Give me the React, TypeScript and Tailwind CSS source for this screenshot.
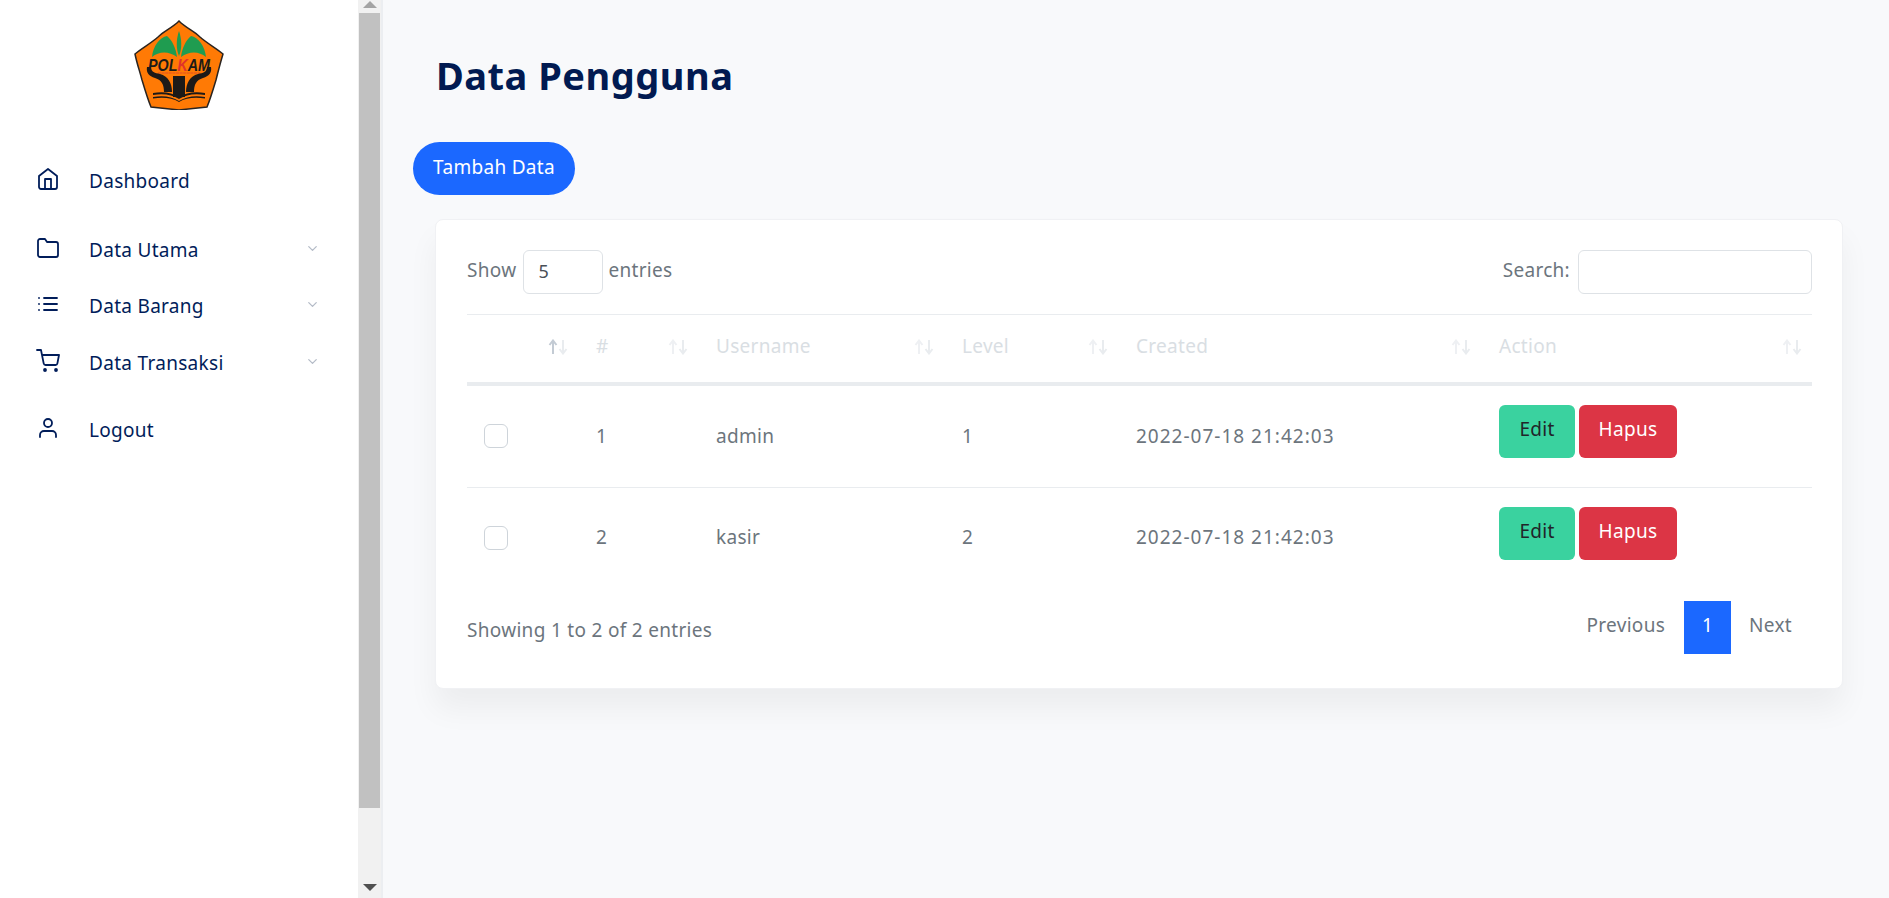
import React from "react";
import { FiHome, FiFolder, FiList, FiShoppingCart, FiUser, FiChevronDown } from "react-icons/fi";

const font = { fontFamily: '"Noto Sans", "Open Sans", sans-serif' };

function Logo() {
  return (
    <svg viewBox="0 0 90 90" className="w-[90px] h-[90px]">
      <path d="M45 1 C52 8 60 11 66 17 C74 24 82 28 89 34 C86 44 84 52 82 60 C79 70 76 80 73 87 C64 88 54 89 45 90 C36 89 26 88 17 87 C14 80 11 70 8 60 C6 52 3 44 1 34 C8 28 16 24 24 17 C30 11 38 8 45 1 Z" fill="#ff7a05" stroke="#2a2420" strokeWidth="1.5" />
      <path d="M45 11 C48 20 48 29 45 36 C42 29 42 20 45 11 Z" fill="#1f9c50" />
      <path d="M43 37 C42 28 38 20 33 16 C26 17 19 26 18 37 C25 31 35 31 43 37 Z" fill="#1f9c50" />
      <path d="M47 37 C48 28 52 20 57 16 C64 17 71 26 72 37 C65 31 55 31 47 37 Z" fill="#1f9c50" />
      <text x="45" y="51" textAnchor="middle" fontSize="17" fontWeight="700" fontStyle="italic" fill="#1d1a18" fontFamily='"Liberation Sans", sans-serif' textLength="62" lengthAdjust="spacingAndGlyphs">POL<tspan fill="#e0332b">K</tspan>AM</text>
      <path d="M24 53 H66" stroke="#d8452c" strokeWidth="0.8" strokeDasharray="3 0.6" />
      <path d="M13 47 C12 53 15 56 21 58 C28 60 30 65 30 72 L38 72 C38 63 34 56 26 54 C21 53 17 52 17 47 Z" fill="#1d1a18" />
      <path d="M77 47 C78 53 75 56 69 58 C62 60 60 65 60 72 L52 72 C52 63 56 56 64 54 C69 53 73 52 73 47 Z" fill="#1d1a18" />
      <rect x="39" y="56" width="12" height="21" fill="#1d1a18" />
      <path d="M19 73 C30 71 38 73 45 77 C52 73 60 71 71 73 L71 75 C60 73 52 75 45 79 C38 75 30 73 19 75 Z M19 77 C30 75 38 77 45 81 C52 77 60 75 71 77 L71 78.5 C60 77 52 78 45 82 C38 78 30 77 19 78.5 Z" fill="#1d1a18" />
    </svg>
  );
}

function NavItem({ icon, label, chevron, cls }: { icon: React.ReactNode; label: string; chevron?: boolean; cls: string }) {
  return (
    <div className={`flex items-center h-[30px] pl-[36px] text-[19px] tracking-[0.3px] text-[#011d5a] ${cls}`}>
      <span className="w-[53px] flex items-center -mt-[4px]">{icon}</span>
      <span className="flex-1">{label}</span>
      {chevron && <FiChevronDown className="mr-[38px] -mt-[4px] text-[#b4bbc7]" size={15} strokeWidth={2} />}
    </div>
  );
}

function Sort({ active }: { active?: boolean }) {
  return (
    <svg viewBox="0 0 20 16" className="w-[20px] h-[16px] -mt-[2px]" fill="none" strokeWidth="2">
      <path d="M5 15V2M1.5 6L5 1.5L8.5 6" stroke={active ? "#c3cbd4" : "#eef0f3"} />
      <path d="M15 1V14M11.5 10L15 14.5L18.5 10" stroke="#e9ecef" />
    </svg>
  );
}

const cols = ["w-[111px]", "w-[120px]", "w-[246px]", "w-[174px]", "w-[363px]", "w-[331px]"];
const heads = ["", "#", "Username", "Level", "Created", "Action"];
const rows = [
  ["1", "admin", "1", "2022-07-18 21:42:03"],
  ["2", "kasir", "2", "2022-07-18 21:42:03"],
];

function Row({ r, last }: { r: string[]; last?: boolean }) {
  return (
    <tr className={last ? "" : "border-b border-[#e9ecef]"}>
      <td className={`h-[104px] pl-[17px] ${last ? "pb-[3px]" : ""}`}>
        <div className="w-[24px] h-[24px] rounded-[6px] border border-[#ced4da] bg-white" />
      </td>
      {r.map((c, i) => (
        <td key={i} className={`pl-[18px] text-[#6c757d] ${last ? "pb-[5px]" : ""} ${i === 3 ? "tracking-[1px]" : ""}`}>{c}</td>
      ))}
      <td className="pl-[18px] align-top pt-[19px]">
        <div className="flex gap-[4px]">
          <button className="w-[76px] h-[53px] rounded-[6px] bg-[#3ad29f] text-[#212529] pb-[4px]">Edit</button>
          <button className="w-[98px] h-[53px] rounded-[6px] bg-[#dc3545] text-white pb-[4px]">Hapus</button>
        </div>
      </td>
    </tr>
  );
}

export default function App() {
  return (
    <div className="flex h-[898px] w-[1889px] overflow-hidden bg-[#f8f9fb]" style={font}>
      <aside className="w-[358px] shrink-0 bg-white">
        <div className="flex justify-center pt-[20px]"><Logo /></div>
        <nav>
          <NavItem icon={<FiHome size={24} strokeWidth={1.8} />} label="Dashboard" cls="mt-[56px]" />
          <NavItem icon={<FiFolder size={24} strokeWidth={1.8} />} label="Data Utama" chevron cls="mt-[39px]" />
          <NavItem icon={<FiList size={24} strokeWidth={1.8} />} label="Data Barang" chevron cls="mt-[26px]" />
          <NavItem icon={<FiShoppingCart size={24} strokeWidth={1.8} />} label="Data Transaksi" chevron cls="mt-[27px]" />
          <NavItem icon={<FiUser size={24} strokeWidth={1.8} />} label="Logout" cls="mt-[37px]" />
        </nav>
      </aside>

      <div className="w-[25px] shrink-0 bg-[#f1f1f1] border-r-2 border-[#eceef1] flex flex-col items-center">
        <svg viewBox="0 0 12 6" className="w-[14px] h-[7px] mt-[1px] mb-[5px]"><path d="M6 0L12 6H0Z" fill="#a3a3a3" /></svg>
        <div className="w-[21px] h-[795px] bg-[#c1c1c1]" />
        <div className="flex-1" />
        <svg viewBox="0 0 12 6" className="w-[14px] h-[7px] mb-[7px]"><path d="M0 0H12L6 6Z" fill="#505050" /></svg>
      </div>

      <main className="flex-1 min-w-0">
        <h1 className="pl-[53px] pt-[45px] h-[142px] text-[38px] leading-[60px] font-bold text-[#011a51] tracking-[0.5px]">Data Pengguna</h1>
        <button className="ml-[30px] w-[162px] h-[53px] rounded-full bg-[#1b68ff] text-white text-[19px] tracking-[0.3px] pb-[3px] block">Tambah Data</button>
        <section className="ml-[52px] mt-[24px] w-[1408px] h-[470px] rounded-[8px] bg-white border border-[#f0f1f4] pl-[31px] pr-[30px] pt-[30px] shadow-[0_20px_30px_rgba(0,0,0,0.05)] text-[19px] tracking-[0.3px]">
          <div className="flex items-center justify-between h-[44px]">
            <div className="flex items-center text-[#6c757d]">
              <span className="-mt-[3px]">Show</span>
              <div className="ml-[7px] mr-[5px] w-[80px] h-[44px] rounded-[6px] border border-[#dee2e6] pl-[14px] pb-[2px] flex items-center text-[#495057] text-[18px]">5</div>
              <span className="-mt-[3px]">entries</span>
            </div>
            <div className="flex items-center text-[#6c757d]">
              <span className="mr-[8px] -mt-[4px]">Search:</span>
              <div className="w-[234px] h-[44px] rounded-[6px] border border-[#dee2e6]" />
            </div>
          </div>
          <table className="table-fixed w-[1345px] mt-[20px] border-t border-[#e9ecef] border-collapse">
            <colgroup>{cols.map((c, i) => <col key={i} className={c} />)}</colgroup>
            <thead>
              <tr className="border-b-4 border-[#e9ecef]">
                {heads.map((h, i) => (
                  <th key={i} className="h-[69px] pl-[18px] pr-[10px] font-normal text-left text-[#d9dee3]">
                    <div className="flex items-center justify-between">
                      <span className="-mt-[4px]">{h}</span>
                      <Sort active={i === 0} />
                    </div>
                  </th>
                ))}
              </tr>
            </thead>
            <tbody>
              <Row r={rows[0]} />
              <Row r={rows[1]} last />
            </tbody>
          </table>
          <div className="flex items-start justify-between mt-[9px]">
            <span className="text-[#6c757d] mt-[15px]">Showing 1 to 2 of 2 entries</span>
            <div className="flex items-center text-[#6c757d]">
              <span className="mr-[19px] -mt-[3px]">Previous</span>
              <span className="w-[47px] h-[53px] bg-[#1b68ff] text-white flex items-center justify-center pb-[3px]">1</span>
              <span className="ml-[18px] mr-[20px] -mt-[3px]">Next</span>
            </div>
          </div>
        </section>
      </main>
    </div>
  );
}
